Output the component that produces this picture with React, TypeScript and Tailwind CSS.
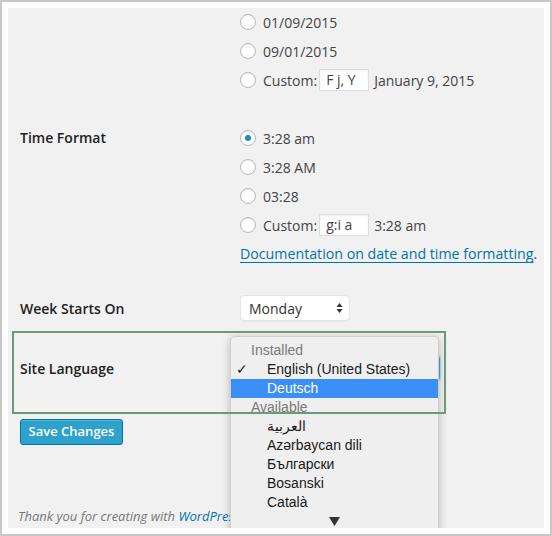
import React from "react";

function Radio({ checked = false }: { checked?: boolean }) {
  return (
    <span className="w-4 h-4 rounded-full border border-[#b4b9be] bg-white shadow-[inset_0_1px_2px_rgba(0,0,0,0.07)] flex items-center justify-center shrink-0">
      {checked && <span className="w-[6px] h-[6px] rounded-full bg-[#1e8cbe]" />}
    </span>
  );
}

function RadioRow({ children, checked }: { children: React.ReactNode; checked?: boolean }) {
  return (
    <div className="flex items-center h-[22px] gap-[7px]">
      <Radio checked={checked} />
      <div className="flex items-center">{children}</div>
    </div>
  );
}

function CustomInput({ value }: { value: string }) {
  return (
    <span className="ml-[2px] mr-[5px] w-[50px] h-[22px] bg-white border border-[#ddd] shadow-[inset_0_1px_2px_rgba(0,0,0,0.07)] px-[6px] leading-[20px]">
      {value}
    </span>
  );
}

const languages = ["العربية", "Azərbaycan dili", "Български", "Bosanski", "Català"];

export default function App() {
  return (
    <div className="w-[552px] h-[536px] border-2 border-[#c8c8c8] bg-white p-[6px] font-['Open_Sans',sans-serif] text-[14px] text-[#444]">
      <div className="relative w-full h-full bg-[#f1f1f1] overflow-hidden">
        <div className="flex flex-col">
          {/* date format (tail) */}
          <div className="flex pt-[3px]">
            <div className="w-[232px]" />
            <div className="flex flex-col gap-[7px]">
              <RadioRow>01/09/2015</RadioRow>
              <RadioRow>09/01/2015</RadioRow>
              <RadioRow>
                Custom: <CustomInput value="F j, Y" /> January 9, 2015
              </RadioRow>
            </div>
          </div>

          {/* time format */}
          <div className="flex mt-[36px]">
            <div className="w-[232px] pl-3 h-[22px] leading-[22px] font-semibold text-[#222]">Time Format</div>
            <div className="flex flex-col gap-[7px]">
              <RadioRow checked>3:28 am</RadioRow>
              <RadioRow>3:28 AM</RadioRow>
              <RadioRow>03:28</RadioRow>
              <RadioRow>
                Custom: <CustomInput value="g:i a" /> 3:28 am
              </RadioRow>
              <div className="mt-[1px] h-[20px] leading-[20px] text-[14.2px]">
                <a className="text-[#0073aa] underline underline-offset-[3px]">Documentation on date and time formatting</a>.
              </div>
            </div>
          </div>

          {/* week starts */}
          <div className="flex items-center mt-[31px]">
            <div className="w-[232px] pl-3 font-semibold text-[#222]">Week Starts On</div>
            <div className="w-[110px] h-[26px] bg-white rounded-[5px] border border-[#e4e4e4] shadow-[0_1px_1px_rgba(0,0,0,0.05)] flex items-center justify-between pl-[8px] pr-[6px] text-[#333]">
              <span>Monday</span>
              <svg width="7" height="12" viewBox="0 0 7 12">
                <path d="M3.5 1 L6.5 5 L0.5 5 Z" fill="#333" />
                <path d="M3.5 11 L6.5 7 L0.5 7 Z" fill="#333" />
              </svg>
            </div>
          </div>

          {/* site language */}
          <div className="flex items-center mt-[34px]">
            <div className="w-[232px] pl-3 font-semibold text-[#222]">Site Language</div>
            <div className="w-[200px] h-[26px] bg-white rounded-[4px] border border-[#5b9dd9] shadow-[0_0_2px_rgba(30,140,190,0.8)]" />
          </div>

          <div className="pl-3 mt-[38px]">
            <button className="w-[103px] h-[26px] rounded-[3px] bg-[#2ea2cc] border border-[#0074a2] text-white font-semibold text-[13px] shadow-[inset_0_1px_0_rgba(120,200,230,0.5)]">
              Save Changes
            </button>
          </div>

          <div className="pl-[10px] mt-[62px] h-[18px] leading-[18px] italic text-[13px] text-[#777]">
            Thank you for creating with <a className="text-[#0073aa]">WordPress</a>.
          </div>
        </div>

        {/* dropdown menu */}
        <div className="absolute left-[222px] top-[328px] w-[209px] h-[230px] bg-[#efefef] border border-[#cfcfcf] rounded-t-[5px] shadow-[0_2px_8px_rgba(0,0,0,0.25)] pt-[4px] font-['Liberation_Sans',sans-serif] text-[14px] text-[#1a1a1a]">
          <div className="h-[19px] leading-[19px] pl-[20px] text-[#7a7a7a]">Installed</div>
          <div className="relative h-[19px] leading-[19px] pl-[36px]">
            <span className="absolute left-[5px] top-0">✓</span>
            English (United States)
          </div>
          <div className="h-[19px] leading-[19px] pl-[36px] bg-[#3a8ef6] text-white">Deutsch</div>
          <div className="h-[19px] leading-[19px] pl-[20px] text-[#7a7a7a]">Available</div>
          {languages.map((l) => (
            <div key={l} className="h-[19px] leading-[19px] pl-[36px]">
              <span dir="ltr">{l}</span>
            </div>
          ))}
          <div className="h-[19px] flex items-center justify-center">
            <svg width="11" height="9" viewBox="0 0 11 9">
              <path d="M0 0 H11 L5.5 9 Z" fill="#333" />
            </svg>
          </div>
        </div>

        {/* highlight outline */}
        <div className="absolute left-[4px] top-[323px] w-[434px] h-[83px] border-2 border-[#6b9a76] pointer-events-none" />
      </div>
    </div>
  );
}
